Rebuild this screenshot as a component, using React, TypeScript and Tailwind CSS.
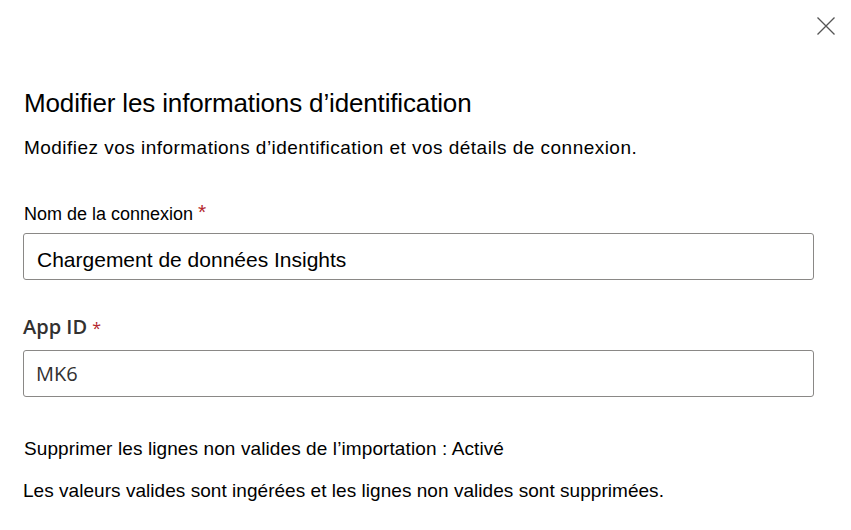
export default function App() {
  return (
    <div className="relative w-[851px] h-[530px] bg-white text-black font-['Liberation_Sans',Arial,sans-serif]">
      {/* Close */}
      <button className="absolute top-[17px] left-[817px] text-[#555]" aria-label="Fermer">
        <svg width="18" height="18" viewBox="0 0 18 18" fill="none" stroke="currentColor" strokeWidth="1.3">
          <path d="M0.5 0.5 17.5 17.5M17.5 0.5 0.5 17.5" />
        </svg>
      </button>

      <div className="flex flex-col pl-[24px] pr-[37px] pt-[87px]">
        <h1 className="text-[26px] leading-[32px] tracking-[-0.15px]">Modifier les informations d’identification</h1>
        <p className="mt-[17px] text-[19px] leading-[24px] tracking-[0.47px]">
          Modifiez vos informations d’identification et vos détails de connexion.
        </p>

        {/* Connection name */}
        <label className="mt-[42px] text-[18px] leading-[24px]">
          Nom de la connexion <span className="text-[#b4262c] text-[21px] leading-[18px] relative -top-[1px]">*</span>
        </label>
        <div className="mt-[7px] -ml-px h-[47px] pt-[14px] px-[13px] border border-[#8a8886] rounded-[3px] text-[21px] leading-[24px]">
          Chargement de données Insights
        </div>

        {/* App ID */}
        <label className="mt-[34px] -ml-px text-[20px] leading-[26px] font-semibold text-[#323130] font-['Open_Sans',sans-serif]">
          App ID <span className="text-[#b4262c] text-[16px] font-normal">*</span>
        </label>
        <div className="mt-[9px] -ml-px h-[47px] pt-[10px] px-[12px] border border-[#8a8886] rounded-[3px] text-[20px] leading-[26px] text-[#323130] font-['Open_Sans',sans-serif]">
          MK6
        </div>

        <p className="mt-[40px] text-[19px] leading-[24px] tracking-[0.1px]">
          Supprimer les lignes non valides de l’importation : Activé
        </p>
        <p className="mt-[18px] -ml-px text-[19px] leading-[24px] tracking-[0.04px]">
          Les valeurs valides sont ingérées et les lignes non valides sont supprimées.
        </p>
      </div>
    </div>
  )
}
